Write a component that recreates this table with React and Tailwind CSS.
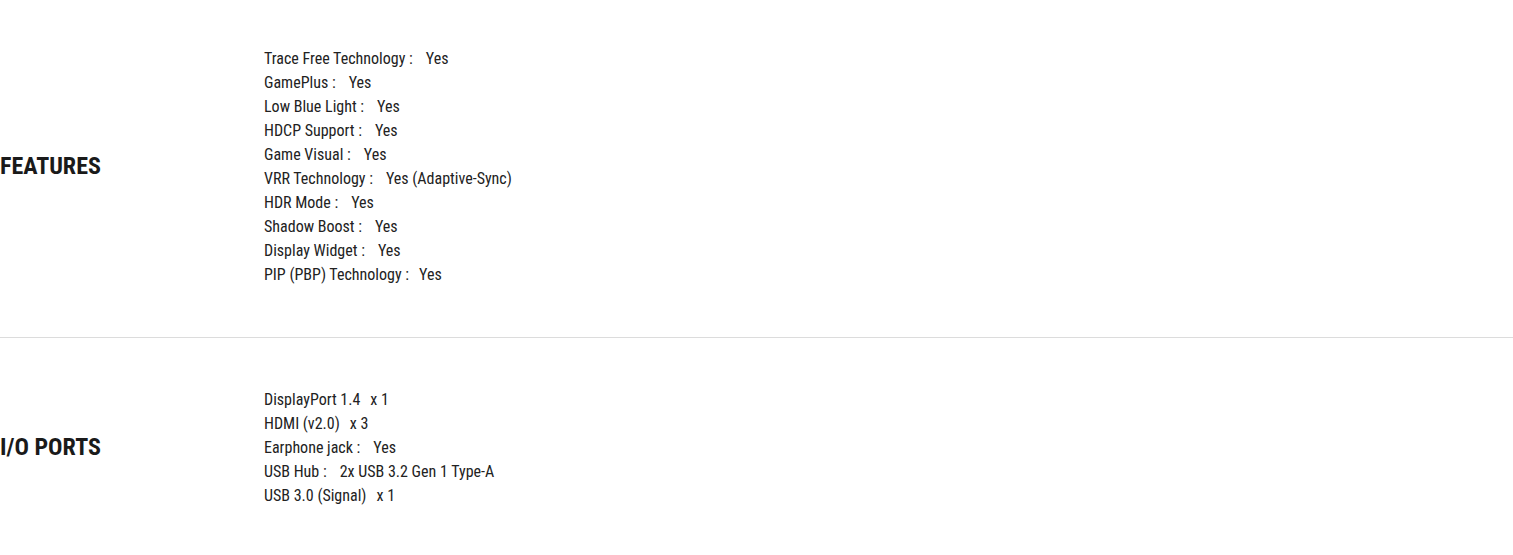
const sections = [
  {
    title: "FEATURES",
    items: [
      ["Trace Free Technology :", "Yes"],
      ["GamePlus :", "Yes"],
      ["Low Blue Light :", "Yes"],
      ["HDCP Support :", "Yes"],
      ["Game Visual :", "Yes"],
      ["VRR Technology :", "Yes (Adaptive-Sync)"],
      ["HDR Mode :", "Yes"],
      ["Shadow Boost :", "Yes"],
      ["Display Widget :", "Yes"],
      ["PIP (PBP) Technology :", "Yes", true],
    ],
  },
  {
    title: "I/O PORTS",
    items: [
      ["DisplayPort 1.4", "x 1", true],
      ["HDMI (v2.0)", "x 3", true],
      ["Earphone jack :", "Yes"],
      ["USB Hub :", "2x USB 3.2 Gen 1 Type-A"],
      ["USB 3.0 (Signal)", "x 1", true],
    ],
  },
]

export default function App() {
  return (
    <div
      className="bg-white text-[#222] min-h-screen"
      style={{ fontFamily: '"Roboto Condensed", Roboto, "Liberation Sans", sans-serif' }}
    >
      {sections.map((section, i) => (
        <div
          key={section.title}
          className={
            "flex items-center " +
            (i === 0 ? "pt-[47px] pb-[50px] border-b border-[#dcdcdc]" : "pt-[50px] pb-[47px]")
          }
        >
          <h2 className="w-[264px] shrink-0 mb-[2px] text-[24px] font-bold text-[#1a1a1a] leading-none">
            {section.title}
          </h2>
          <ul className="text-[16px] leading-6">
            {section.items.map(([label, value, tight]) => (
              <li key={label}>
                {label}
                <span className={tight ? "ml-[10px]" : "ml-[13px]"}>{value}</span>
              </li>
            ))}
          </ul>
        </div>
      ))}
    </div>
  )
}
